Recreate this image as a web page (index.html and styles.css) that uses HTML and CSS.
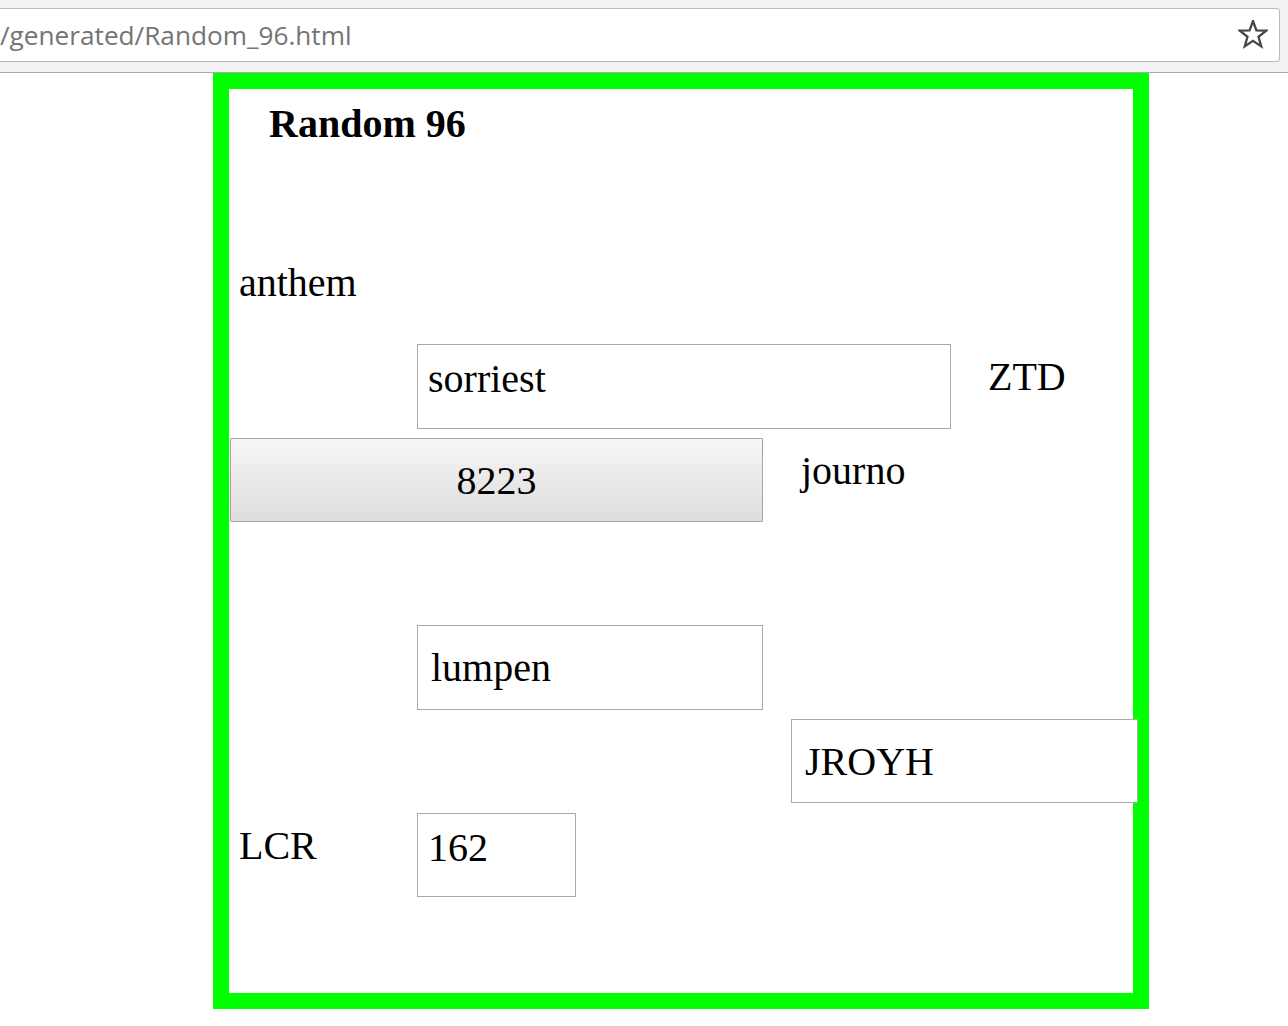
FILE: index.html
```html
<!DOCTYPE html>
<html lang="en">
<head>
<meta charset="utf-8">
<title>Random 96</title>
<link rel="stylesheet" href="styles.css">
</head>
<body>
<header class="toolbar">
  <div class="omnibox">
    <span class="url">/generated/Random_96.html</span>
    <svg class="star" width="30" height="30" viewBox="0 0 30 30" aria-hidden="true">
      <path d="M15 1 L18.41 10.31 L28.31 10.67 L20.52 16.79 L23.23 26.33 L15 20.8 L6.77 26.33 L9.48 16.79 L1.69 10.67 L11.59 10.31 Z"/>
    </svg>
  </div>
</header>
<main class="frame">
  <div class="canvas">
    <h1 class="title">Random 96</h1>
    <div class="label at-anthem">anthem</div>
    <div class="field at-sorriest">sorriest</div>
    <div class="label at-ztd">ZTD</div>
    <button class="btn at-8223" type="button">8223</button>
    <div class="label at-journo">journo</div>
    <div class="field loose at-lumpen">lumpen</div>
    <div class="field loose at-jroyh">JROYH</div>
    <div class="label at-lcr">LCR</div>
    <div class="field at-162">162</div>
  </div>
</main>
</body>
</html>
```

FILE: styles.css
```css
html, body {
  margin: 0;
  padding: 0;
  background: #ffffff;
}

body {
  width: 1288px;
  height: 1026px;
  overflow: hidden;
}

/* ---------- browser toolbar ---------- */
.toolbar {
  display: flex;
  height: 73px;
  padding: 8px 8px 0 0;
  box-sizing: border-box;
  background: #f2f2f2;
  border-bottom: 1px solid #a9a9a9;
}

.omnibox {
  flex: 1;
  display: flex;
  align-items: center;
  height: 54px;
  box-sizing: border-box;
  margin-left: -10px;
  padding: 0 11px 0 9px;
  background: #ffffff;
  border: 1px solid #b9b9b9;
  border-radius: 3px;
}

.url {
  flex: 1;
  font-family: "Open Sans", "Noto Sans", sans-serif;
  font-size: 26.2px;
  line-height: 52px;
  color: #747474;
  white-space: nowrap;
}

.star {
  flex: none;
  fill: none;
  stroke: #474747;
  stroke-width: 2.3;
  stroke-linejoin: miter;
}

/* ---------- page frame ---------- */
.frame {
  display: block;
  width: 904px;
  height: 904px;
  margin-left: 213px;
  border: 16px solid #00ff00;
  background: #ffffff;
}

.canvas {
  display: grid;
  height: 904px;
  grid-template-columns: 188px 187px 187px 187px 1fr;
  grid-template-rows: 67px 94px 94px 94px 93px 94px 94px 94px 94px 1fr;
  font-family: "Liberation Serif", "Times New Roman", serif;
  font-size: 40px;
  line-height: 46px;
  color: #000000;
}

.title {
  grid-row: 1;
  grid-column: 1 / span 3;
  margin: 0;
  padding: 12px 0 0 40px;
  font-size: 40px;
  font-weight: bold;
  line-height: 46px;
}

.label {
  padding: 10px 0 0 10px;
  white-space: nowrap;
}

.field {
  box-sizing: border-box;
  height: 84px;
  padding: 11px 0 0 10px;
  background: #ffffff;
  border: 1px solid #a9a9a9;
  white-space: nowrap;
}

.field.loose {
  padding: 19px 0 0 13px;
}

.btn {
  box-sizing: border-box;
  height: 84px;
  margin: 0 0 0 1px;
  padding: 0;
  font-family: "Liberation Serif", "Times New Roman", serif;
  font-size: 40px;
  color: #000000;
  background: linear-gradient(#f6f6f6, #dddddd);
  border: 1px solid #a6a6a6;
  border-radius: 1px;
}

/* placements on the canvas grid */
.at-anthem   { grid-row: 3; grid-column: 1; }
.at-sorriest { grid-row: 4; grid-column: 2 / span 3; width: 534px; height: 85px; }
.at-ztd      { grid-row: 4; grid-column: 5; }
.at-8223     { grid-row: 5; grid-column: 1 / span 3; width: 533px; }
.at-journo   { grid-row: 5; grid-column: 4; }
.at-lumpen   { grid-row: 7; grid-column: 2 / span 2; width: 346px; height: 85px; }
.at-jroyh    { grid-row: 8; grid-column: 4 / span 2; width: 347px; }
.at-lcr      { grid-row: 9; grid-column: 1; }
.at-162      { grid-row: 9; grid-column: 2; width: 159px; }
```
